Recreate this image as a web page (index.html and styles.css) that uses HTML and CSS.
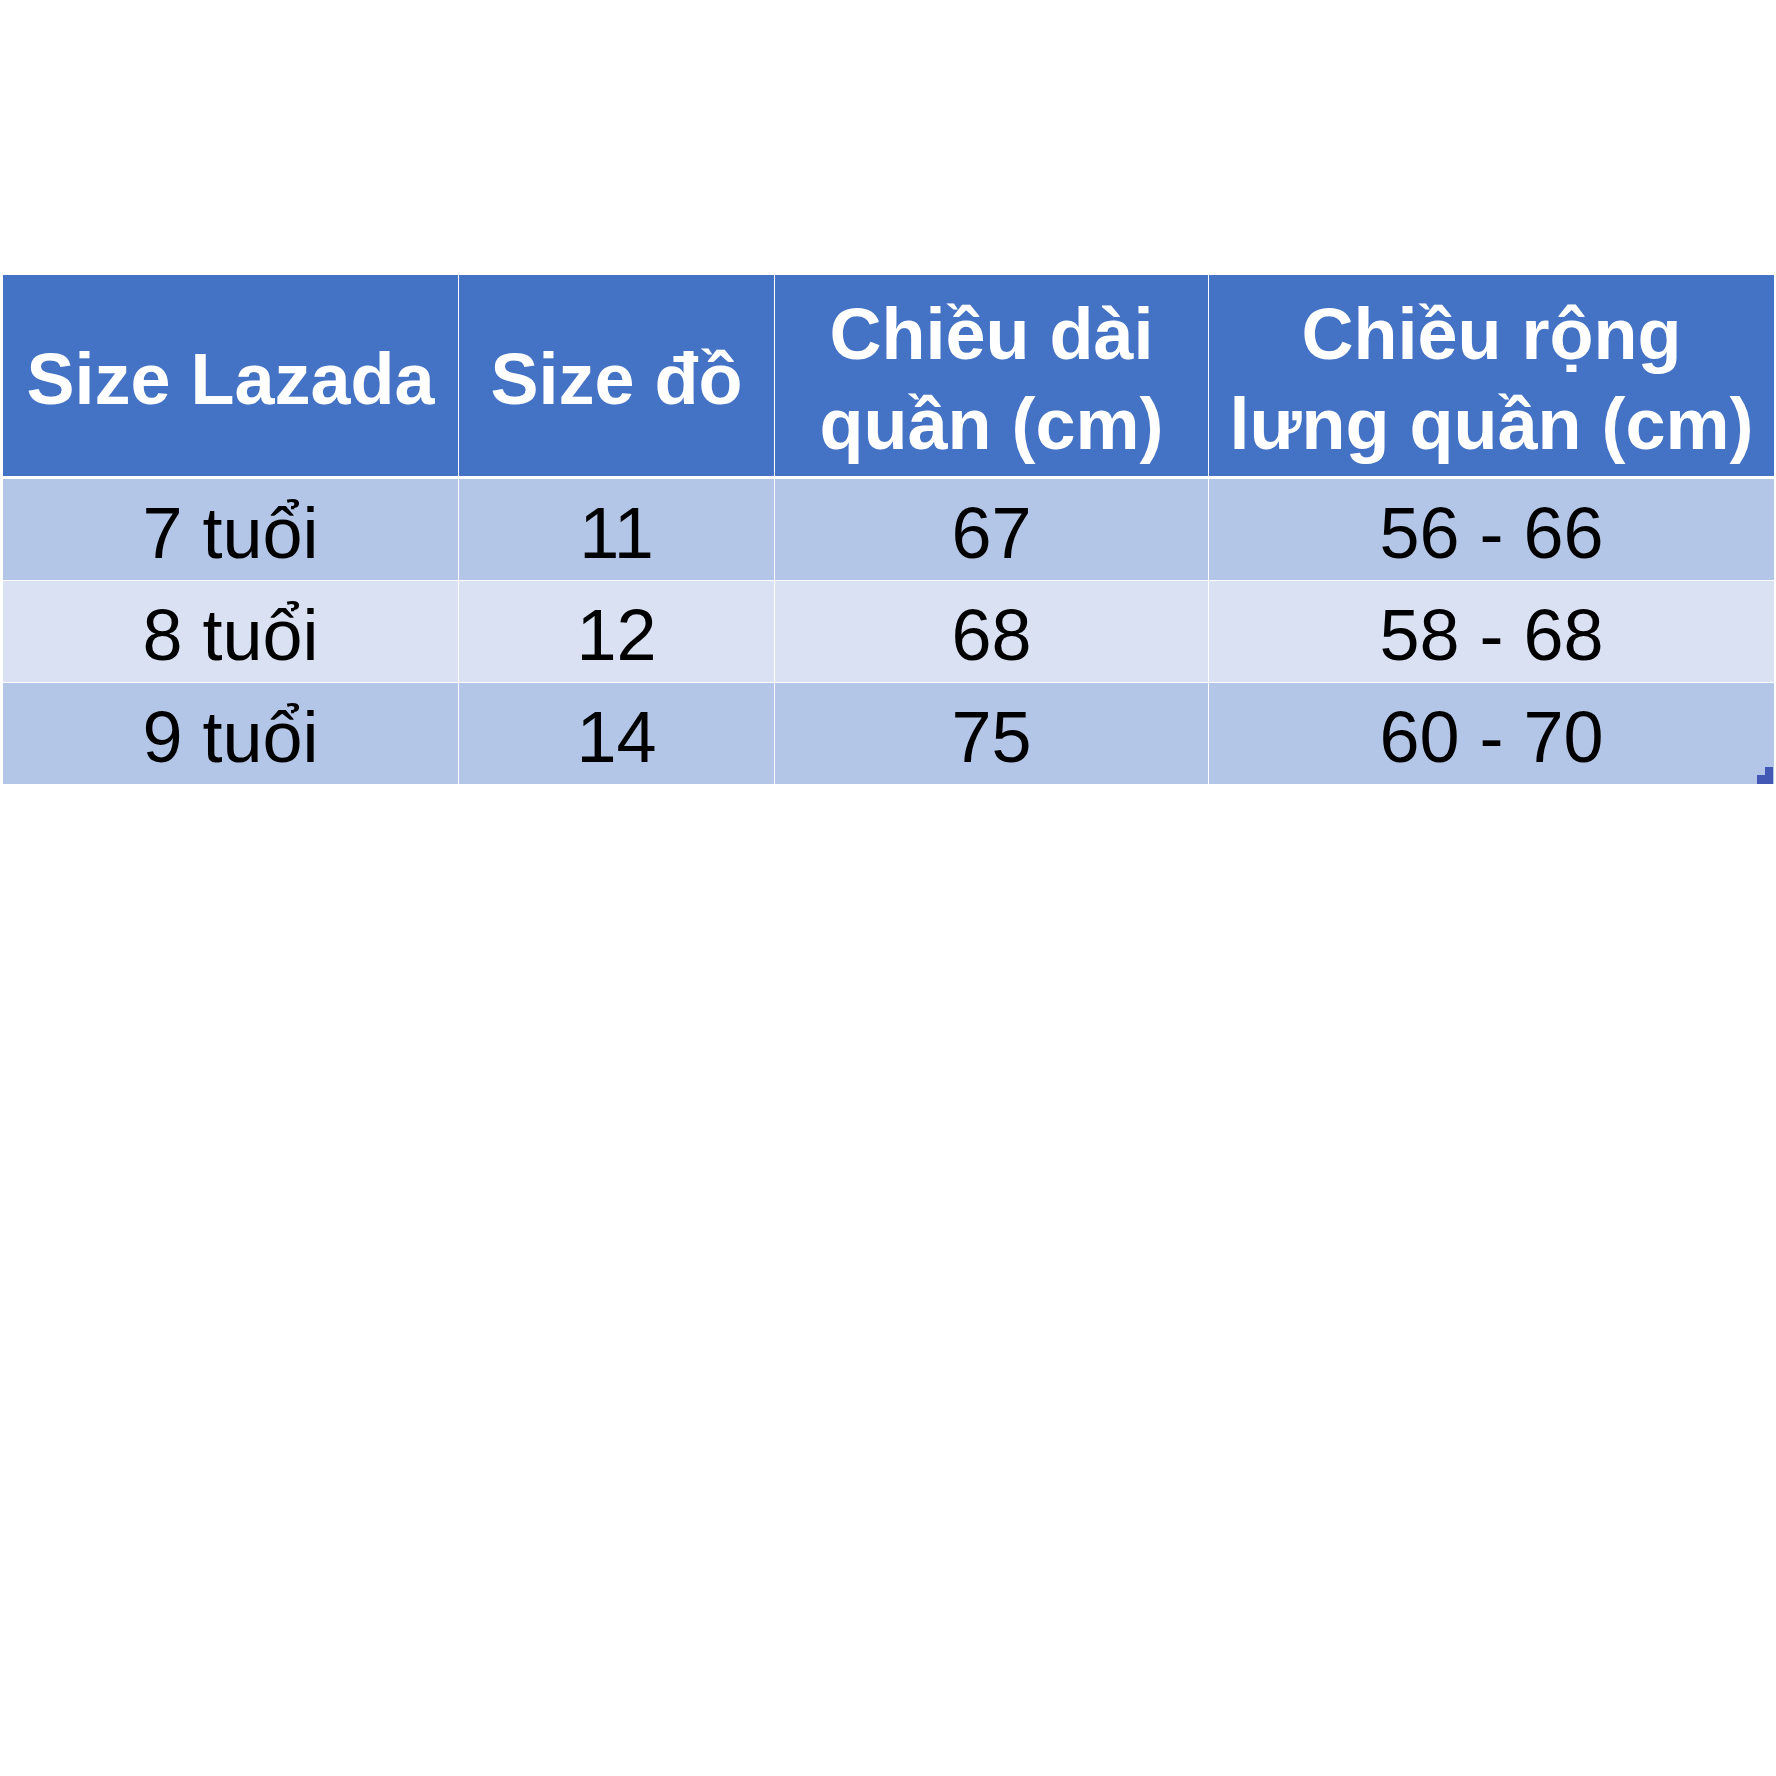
FILE: index.html
```html
<!DOCTYPE html>
<html lang="vi">
<head>
<meta charset="utf-8">
<title>Bảng size quần</title>
<link rel="stylesheet" href="styles.css">
</head>
<body>
<div class="sheet">
  <div class="row head">
    <div class="cell"><span>Size Lazada</span></div>
    <div class="cell"><span>Size đồ</span></div>
    <div class="cell"><span>Chiều dài<br>quần (cm)</span></div>
    <div class="cell"><span>Chiều rộng<br>lưng quần (cm)</span></div>
  </div>
  <div class="row odd">
    <div class="cell"><span>7 tuổi</span></div>
    <div class="cell"><span>11</span></div>
    <div class="cell"><span>67</span></div>
    <div class="cell"><span>56 - 66</span></div>
  </div>
  <div class="row even">
    <div class="cell"><span>8 tuổi</span></div>
    <div class="cell"><span>12</span></div>
    <div class="cell"><span>68</span></div>
    <div class="cell"><span>58 - 68</span></div>
  </div>
  <div class="row odd last">
    <div class="cell"><span>9 tuổi</span></div>
    <div class="cell"><span>14</span></div>
    <div class="cell"><span>75</span></div>
    <div class="cell"><span>60 - 70</span></div>
    <svg class="handle" width="16" height="17" viewBox="0 0 16 17"><polygon points="8,0 16,0 16,17 0,17 0,8 8,8" fill="#4357b5"/></svg>
  </div>
</div>
</body>
</html>
```

FILE: styles.css
```css
html, body {
  margin: 0;
  padding: 0;
  background: #ffffff;
}

body {
  font-family: "Liberation Sans", Arial, sans-serif;
}

.sheet {
  margin-top: 275px;
  margin-left: 3px;
  width: 1771px;
  display: flex;
  flex-direction: column;
  gap: 1px;
  background: #ffffff;
}

.row {
  display: grid;
  grid-template-columns: 455px 315px 433px 565px;
  column-gap: 1px;
  height: 101px;
  position: relative;
}

.cell {
  display: flex;
  align-items: center;
  justify-content: center;
  text-align: center;
  font-size: 72px;
  line-height: 90px;
  color: #000000;
  padding-top: 6px;
  box-sizing: border-box;
}

.head {
  height: 201px;
  margin-bottom: 2px;
}

.head .cell {
  background: #4472c4;
  color: #ffffff;
  font-weight: bold;
  padding-top: 7px;
}

.odd .cell {
  background: #b4c6e7;
}

.even .cell {
  background: #d9e1f2;
}

.handle {
  position: absolute;
  right: 1px;
  bottom: 0;
}
```
